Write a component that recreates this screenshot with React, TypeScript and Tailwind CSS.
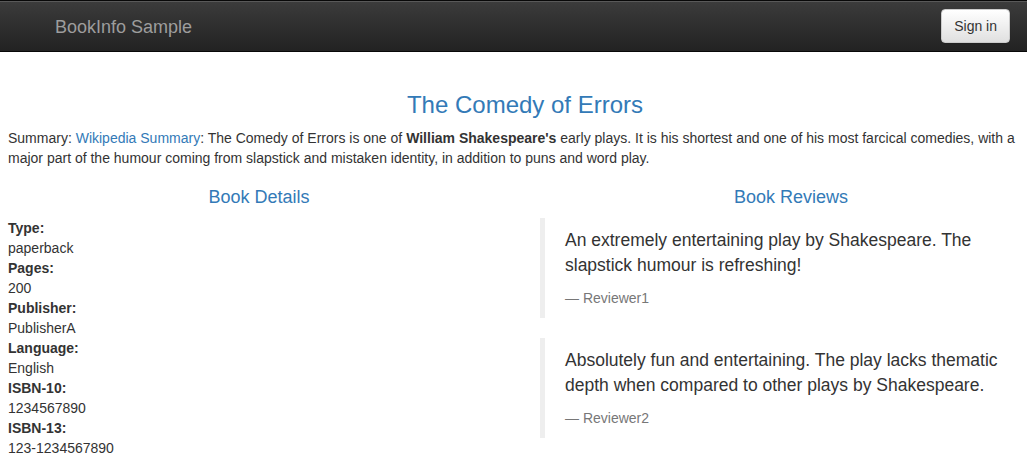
export default function App() {
  const details: [string, string][] = [
    ['Type:', 'paperback'],
    ['Pages:', '200'],
    ['Publisher:', 'PublisherA'],
    ['Language:', 'English'],
    ['ISBN-10:', '1234567890'],
    ['ISBN-13:', '123-1234567890'],
  ];

  const reviews = [
    {
      text: 'An extremely entertaining play by Shakespeare. The slapstick humour is refreshing!',
      reviewer: 'Reviewer1',
    },
    {
      text: 'Absolutely fun and entertaining. The play lacks thematic depth when compared to other plays by Shakespeare.',
      reviewer: 'Reviewer2',
    },
  ];

  return (
    <div className="w-full overflow-hidden bg-white text-[14px] leading-[20px] text-[#333] font-['Liberation_Sans',Arial,sans-serif]">
      {/* navbar */}
      <nav className="h-[52px] border-y border-[#080808] bg-gradient-to-b from-[#3c3c3c] to-[#222] shadow-[inset_0_1px_0_rgba(255,255,255,0.15)] flex items-center justify-between">
        <span className="ml-[55px] mt-[2px] text-[18px] leading-[20px] text-[#9d9d9d]">BookInfo Sample</span>
        <button className="mr-[17px] h-[34px] px-[12px] rounded-[4px] border border-[#ccc] bg-gradient-to-b from-white to-[#e0e0e0] text-[14px] text-[#333] shadow-[inset_0_1px_0_rgba(255,255,255,0.15),0_1px_1px_rgba(0,0,0,0.075)]">
          Sign in
        </button>
      </nav>

      {/* page body */}
      <div className="ml-[8px] w-[1034px] pt-[20px]">
        <h3 className="mt-[20px] mb-[10px] text-center text-[24px] leading-[1.1] text-[#337ab7]">The Comedy of Errors</h3>
        <p className="mb-[10px]">
          Summary: <span className="text-[#337ab7]">Wikipedia Summary</span>: The Comedy of Errors is one of{' '}
          <b>William Shakespeare's</b> early plays. It is his shortest and one of his most farcical comedies, with a
          major part of the humour coming from slapstick and mistaken identity, in addition to puns and word play.
        </p>

        <div className="grid grid-cols-2 gap-[30px]">
          <div>
            <h4 className="mt-[10px] mb-[10px] text-center text-[18px] leading-[1.1] text-[#337ab7]">Book Details</h4>
            <dl className="mb-[20px]">
              {details.map(([k, v]) => (
                <div key={k}>
                  <dt className="font-bold">{k}</dt>
                  <dd>{v}</dd>
                </div>
              ))}
            </dl>
          </div>
          <div>
            <h4 className="mt-[10px] mb-[10px] text-center text-[18px] leading-[1.1] text-[#337ab7]">Book Reviews</h4>
            {reviews.map(r => (
              <blockquote key={r.reviewer} className="mb-[20px] border-l-[5px] border-[#eee] px-[20px] py-[10px] text-[17.5px] leading-[25px]">
                <p className="mb-[10px]">{r.text}</p>
                <small className="block text-[14px] leading-[20px] text-[#777]">— {r.reviewer}</small>
              </blockquote>
            ))}
          </div>
        </div>
      </div>
    </div>
  );
}
